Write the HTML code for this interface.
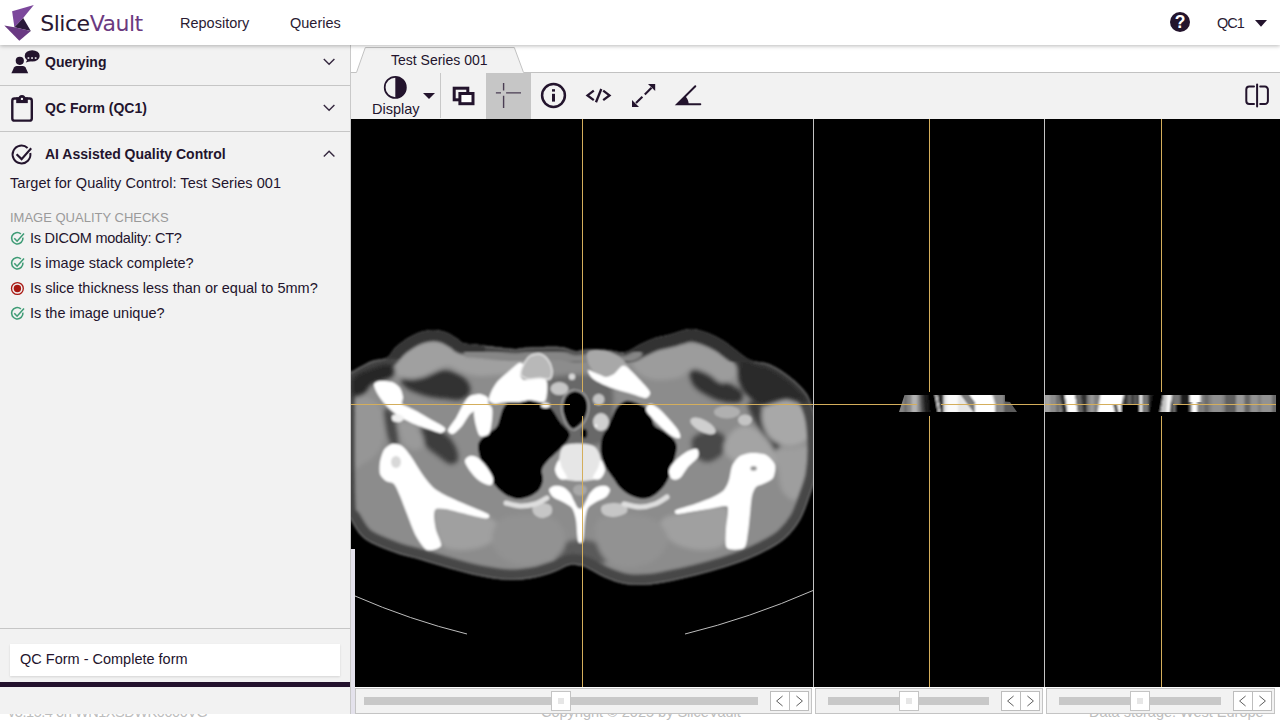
<!DOCTYPE html>
<html lang="en">
<head>
<meta charset="utf-8">
<title>SliceVault</title>
<style>
*{box-sizing:border-box;margin:0;padding:0}
html,body{width:1280px;height:720px;overflow:hidden;background:#fff}
body{font-family:"Liberation Sans",sans-serif;color:#23142d;font-size:14.5px;position:relative}
.abs{position:absolute}
#header{position:absolute;left:0;top:0;width:1280px;height:45px;background:#fff;box-shadow:0 1px 4px rgba(0,0,0,.28);z-index:10}
#logo-txt{position:absolute;left:40.3px;top:8.5px;font-family:"DejaVu Sans",sans-serif;font-size:22px;line-height:30px;color:#2a1832;letter-spacing:-0.5px;white-space:nowrap}
#logo-txt span{color:#6b3a80}
.nav{position:absolute;top:14px;font-size:14.5px;line-height:18px;white-space:nowrap;color:#2a1b33}
#sidebar{position:absolute;left:0;top:45px;width:351px;height:669px;background:#f2f2f2;border-right:1px solid #c9c9c9}
.row{position:absolute;left:0;width:350px;height:46px;border-bottom:1px solid #c6c6c6}
.row .t{position:absolute;left:45px;top:13px;font-weight:bold;font-size:14px;line-height:18px;white-space:nowrap;color:#23142d}
.chev{position:absolute;left:321px;width:15px;height:10px}
.txt{position:absolute;white-space:nowrap;line-height:18px}
#footer div{position:absolute;top:703px;font-size:14.5px;line-height:18px;color:#bdbdbd;white-space:nowrap}
#main{position:absolute;left:351px;top:45px;width:929px;height:669px;background:#fff}
#toolbar{position:absolute;left:0;top:28px;width:929px;height:46px;background:#f2f2f2}
.sl{position:absolute;top:643px;height:26px;background:#f2f2f2;border:1px solid #c4c4c4}
.sl .track{position:absolute;top:8px;height:8px;background:#c8c8c8}
.sl .thumb{position:absolute;top:2px;width:20px;height:20px;background:#fff;border:1px solid #c4c4c4}
.sl .thumb i{position:absolute;left:6px;top:6px;width:6px;height:6px;background:#e6e6e6}
.sl .btn{position:absolute;top:2px;width:20px;height:20px;background:#fff;border:1px solid #bdbdbd}
.sl .btn svg{position:absolute;left:0;top:0}
</style>
</head>
<body>

<div id="footer">
  <div style="left:8px;letter-spacing:-0.44px">v3.15.4 on WN1XSDWK0000VG</div>
  <div style="left:541px">Copyright © 2025 by SliceVault</div>
  <div style="left:1089px">Data storage: West Europe</div>
</div>

<div id="header">
  <svg class="abs" style="left:0;top:0" width="45" height="45" viewBox="0 0 45 45">
    <polygon points="12.1,11.2 33.8,5 23.2,17.9 14.4,27.2" fill="#7c489c"/>
    <polygon points="23.2,17.9 30.8,30.9 14.4,27.2" fill="#2b1a3a"/>
    <polygon points="4.3,25.6 14.4,27.2 30.8,30.9 19.3,40.8" fill="#6a3a83"/>
  </svg>
  <div id="logo-txt">Slice<span>Vault</span></div>
  <div class="nav" style="left:180px">Repository</div>
  <div class="nav" style="left:290px">Queries</div>
  <svg class="abs" style="left:1169px;top:11px" width="22" height="22" viewBox="0 0 22 22">
    <circle cx="11" cy="11" r="10" fill="#23142d"/>
    <text x="11" y="17" text-anchor="middle" font-family="Liberation Sans, sans-serif" font-weight="bold" font-size="17.5" fill="#fff">?</text>
  </svg>
  <div class="nav" style="left:1217px;letter-spacing:-1px">QC1</div>
  <svg class="abs" style="left:1254px;top:19px" width="14" height="9" viewBox="0 0 14 9"><polygon points="1,1 13,1 7,7.8" fill="#23142d"/></svg>
</div>

<div id="sidebar">
  <svg class="abs" style="left:0;top:0" width="350" height="290" viewBox="0 45 350 290">
    <g fill="#23142d" stroke="none">
      <!-- querying -->
      <circle cx="19.8" cy="60.8" r="4.1"/>
      <path d="M11.4 73.2L14 67.6Q14.8 66 16.6 66H23Q24.8 66 25.6 67.6L28.2 73.2z"/>
      <ellipse cx="32.2" cy="55.9" rx="7.5" ry="5.7"/>
      <polygon points="27.5,59.5 25.8,62.6 31,61"/>
      <g fill="#e8e6ea"><rect x="27.6" y="57.2" width="1.7" height="1.7"/><rect x="31.2" y="57.2" width="1.7" height="1.7"/><rect x="34.8" y="57.2" width="1.7" height="1.7"/></g>
      <!-- clipboard -->
      <rect x="12.3" y="98.5" width="19.5" height="22.1" rx="2.2" fill="none" stroke="#23142d" stroke-width="2.4"/>
      <rect x="16.2" y="97.4" width="11.6" height="5.7"/>
      <circle cx="21.95" cy="98.6" r="3.5"/>
      <circle cx="21.95" cy="98.9" r="1.2" fill="#f2f2f2"/>
    </g>
    <!-- ai check -->
    <g fill="none" stroke="#23142d" stroke-width="2">
      <path d="M27.6 148A8.9 8.9 0 1 0 30.3 153"/>
      <polyline points="16.6,154.2 21.6,159.1 31.2,148.2" stroke-width="2.1"/>
    </g>
    <!-- chevrons -->
    <g fill="none" stroke="#35283f" stroke-width="1.4">
      <polyline points="323.8,59 329.1,64.3 334.4,59"/>
      <polyline points="323.8,105 329.1,110.3 334.4,105"/>
      <polyline points="323.8,156.6 329.1,151.3 334.4,156.6"/>
    </g>
    <!-- checks -->
    <g fill="none" stroke="#3f9c76" stroke-width="1.55">
      <g><path d="M20.9 233.9A5.7 5.7 0 1 0 22.9 237.6"/><polyline points="14.3,238.3 17.1,241.2 24,233.4"/></g>
      <g transform="translate(0 25)"><path d="M20.9 233.9A5.7 5.7 0 1 0 22.9 237.6"/><polyline points="14.3,238.3 17.1,241.2 24,233.4"/></g>
      <g transform="translate(0 75)"><path d="M20.9 233.9A5.7 5.7 0 1 0 22.9 237.6"/><polyline points="14.3,238.3 17.1,241.2 24,233.4"/></g>
    </g>
    <circle cx="17.4" cy="288.5" r="5.9" fill="none" stroke="#a81711" stroke-width="1.3"/>
    <circle cx="17.4" cy="288.5" r="3.7" fill="#a81711"/>
  </svg>
  <div class="row" style="top:-5px">
    <div class="t">Querying</div>
  </div>
  <div class="row" style="top:41px">
    <div class="t">QC Form (QC1)</div>
  </div>
  <div class="row" style="top:87px;border-bottom:none">
    <div class="t">AI Assisted Quality Control</div>
  </div>
  <div class="txt" style="left:10px;top:129px;letter-spacing:0.05px">Target for Quality Control: Test Series 001</div>
  <div class="txt" style="left:10px;top:164px;color:#9a9a9a;font-size:13px">IMAGE QUALITY CHECKS</div>
  <div class="txt" style="left:30px;top:184px;letter-spacing:-0.25px">Is DICOM modality: CT?</div>
  <div class="txt" style="left:30px;top:209px">Is image stack complete?</div>
  <div class="txt" style="left:30px;top:234px">Is slice thickness less than or equal to 5mm?</div>
  <div class="txt" style="left:30px;top:259px">Is the image unique?</div>
  <div class="abs" style="left:0;top:583px;width:350px;height:1px;background:#c6c6c6"></div>
  <div class="abs" style="left:10px;top:599px;width:330px;height:32px;background:#fff;box-shadow:0 1px 2px rgba(0,0,0,.12)">
    <div class="txt" style="left:10px;top:6px">QC Form - Complete form</div>
  </div>
  <div class="abs" style="left:0;top:637px;width:350px;height:5px;background:#23122d"></div>
</div>

<div id="main">
  <div id="toolbar"></div>
  <!-- tab strip -->
  <svg class="abs" style="left:0;top:0" width="929" height="29" viewBox="351 45 929 29">
    <polygon points="356.5,73 365.3,47.5 514.3,47.5 523.5,73" fill="#f2f2f2"/>
    <polyline points="351,72.5 356.5,72.5 365.3,47.5 514.3,47.5 523.5,72.5 1280,72.5" fill="none" stroke="#c2c2c2" stroke-width="1"/>
  </svg>
  <div class="txt" style="left:40px;top:6px;font-size:14px">Test Series 001</div>

  <!-- toolbar content -->
  <div class="abs" style="left:135px;top:28px;width:45px;height:46px;background:#c6c6c6"></div>
  <div class="abs" style="left:89px;top:28px;width:1px;height:45px;background:#c8c8c8"></div>
  <div class="txt" style="left:21px;top:55px;font-size:14.5px">Display</div>
  <svg class="abs" style="left:0;top:28px" width="929" height="46" viewBox="351 73 929 46">
    <g fill="none" stroke="#23142d">
      <!-- display -->
      <circle cx="395.3" cy="87.4" r="10.6" stroke-width="1.7"/>
      <path d="M395.3 76.8A10.6 10.6 0 0 1 395.3 98z" fill="#23142d" stroke="none"/>
      <polygon points="423,93 435,93 429,99" fill="#23142d" stroke="none"/>
      <!-- overlay -->
      <rect x="454.2" y="88.2" width="13.6" height="11.6" stroke-width="3"/>
      <rect x="459.9" y="93.5" width="13.1" height="10.2" stroke-width="3" fill="#fff"/>
      <!-- crosshair -->
      <g stroke="#4a3d53" stroke-width="1.4">
        <path d="M503.6 83V90.4M503.6 95.7V108M495.9 92.9H501M506.1 92.9H521"/>
      </g>
      <!-- info -->
      <circle cx="553.5" cy="95.5" r="11.4" stroke-width="2.5"/>
      <rect x="552" y="89.2" width="3" height="2.4" fill="#23142d" stroke="none"/>
      <rect x="552" y="93.8" width="3" height="7.8" fill="#23142d" stroke="none"/>
      <!-- code -->
      <g stroke-width="2.3">
        <polyline points="593.8,90.6 587.5,95.4 593.8,100.2"/>
        <polyline points="603.2,90.6 609.5,95.4 603.2,100.2"/>
        <line x1="601.3" y1="89" x2="596" y2="102.2"/>
      </g>
      <!-- arrows -->
      <g stroke-width="2.1">
        <line x1="636" y1="103" x2="642.4" y2="96.8"/>
        <line x1="644.8" y1="94.4" x2="651.5" y2="87.8"/>
      </g>
      <polygon points="655.2,84.1 648,84.1 655.2,91" fill="#23142d" stroke="none"/>
      <polygon points="632,106.9 632,100.1 639,106.9" fill="#23142d" stroke="none"/>
      <!-- angle -->
      <g stroke-width="2" stroke-linecap="round">
        <polyline points="695.3,86.3 677.2,104.3 700.3,104.3"/>
      </g>
      <path d="M677.2 104.3L685.3 96.2A11.5 11.5 0 0 1 688.7 104.3z" fill="#23142d" stroke="none"/>
      <!-- split -->
      <g stroke-width="2" stroke-linecap="round">
        <path d="M1254 86.6H1249.3A3 3 0 0 0 1246.3 89.6V101A3 3 0 0 0 1249.3 104H1254"/>
        <path d="M1260.2 86.6H1264.9A3 3 0 0 1 1267.9 89.6V101A3 3 0 0 1 1264.9 104H1260.2"/>
        <line x1="1257.1" y1="84.4" x2="1257.1" y2="106.6"/>
      </g>
    </g>
  </svg>

  <!-- viewer -->
  <div class="abs" style="left:0;top:74px;width:929px;height:568px;background:#000"></div>
  <!--CT--><svg class="abs" style="left:0;top:74px" width="462" height="568" viewBox="351 119 462 568">
<defs><clipPath id="bc"><path d="M345.0 374.0C346.0 351.8 348.5 373.2 351.0 372.0C353.5 370.8 356.5 368.8 360.0 367.0C363.5 365.2 367.5 362.6 372.0 361.0C376.5 359.4 383.2 359.7 387.0 357.5C390.8 355.3 392.0 350.9 395.0 348.0C398.0 345.1 401.2 342.5 405.0 340.0C408.8 337.5 413.5 334.7 418.0 333.0C422.5 331.3 427.5 330.2 432.0 330.0C436.5 329.8 440.8 330.6 445.0 332.0C449.2 333.4 454.0 336.7 457.0 338.5C460.0 340.3 459.2 341.9 463.0 343.0C466.8 344.1 473.8 344.2 480.0 345.0C486.2 345.8 494.2 346.8 500.0 347.5C505.8 348.2 510.0 349.0 515.0 349.0C520.0 349.0 522.5 347.8 530.0 347.5C537.5 347.2 552.5 346.4 560.0 347.0C567.5 347.6 571.2 350.5 575.0 351.0C578.8 351.5 580.5 350.2 583.0 350.0C585.5 349.8 586.0 349.5 590.0 349.5C594.0 349.5 601.2 349.6 607.0 350.0C612.8 350.4 619.5 352.9 625.0 352.0C630.5 351.1 635.0 346.8 640.0 344.5C645.0 342.2 650.0 339.7 655.0 338.0C660.0 336.3 664.2 336.0 670.0 334.5C675.8 333.0 684.2 329.4 690.0 329.0C695.8 328.6 699.7 330.2 705.0 332.0C710.3 333.8 717.0 337.1 722.0 340.0C727.0 342.9 730.3 346.2 735.0 349.5C739.7 352.8 744.2 357.5 750.0 360.0C755.8 362.5 763.3 361.7 770.0 364.5C776.7 367.3 784.2 372.5 790.0 377.0C795.8 381.5 801.5 387.2 805.0 391.5C808.5 395.8 809.2 398.2 811.0 403.0C812.8 407.8 814.8 412.2 816.0 420.0C817.2 427.8 818.0 440.8 818.0 450.0C818.0 459.2 817.3 467.5 816.0 475.0C814.7 482.5 812.7 487.5 810.0 495.0C807.3 502.5 804.2 512.8 800.0 520.0C795.8 527.2 790.8 533.3 785.0 538.5C779.2 543.7 772.5 547.1 765.0 551.0C757.5 554.9 749.2 558.6 740.0 562.0C730.8 565.4 720.0 568.7 710.0 571.5C700.0 574.3 690.0 576.8 680.0 579.0C670.0 581.2 659.2 583.7 650.0 584.5C640.8 585.3 632.5 585.2 625.0 584.0C617.5 582.8 610.8 579.9 605.0 577.5C599.2 575.1 593.8 571.4 590.0 569.5C586.2 567.6 585.3 566.8 582.0 566.0C578.7 565.2 574.5 564.1 570.0 565.0C565.5 565.9 560.8 569.4 555.0 571.5C549.2 573.6 542.5 576.1 535.0 577.5C527.5 578.9 519.2 580.2 510.0 580.0C500.8 579.8 490.0 577.9 480.0 576.0C470.0 574.1 460.0 571.2 450.0 568.5C440.0 565.8 429.2 562.2 420.0 559.5C410.8 556.8 404.2 555.9 395.0 552.5C385.8 549.1 372.3 544.4 365.0 539.0C357.7 533.6 354.3 525.7 351.0 520.0C347.7 514.3 346.0 529.3 345.0 505.0C344.0 480.7 344.0 396.2 345.0 374.0z"/></clipPath>
<filter id="b1" x="-5%" y="-5%" width="110%" height="110%"><feGaussianBlur stdDeviation="1"/></filter>
<filter id="b2" x="-10%" y="-10%" width="120%" height="120%"><feGaussianBlur stdDeviation="2"/></filter>
</defs>
<g filter="url(#b1)">
<path d="M345.0 374.0C346.0 351.8 348.5 373.2 351.0 372.0C353.5 370.8 356.5 368.8 360.0 367.0C363.5 365.2 367.5 362.6 372.0 361.0C376.5 359.4 383.2 359.7 387.0 357.5C390.8 355.3 392.0 350.9 395.0 348.0C398.0 345.1 401.2 342.5 405.0 340.0C408.8 337.5 413.5 334.7 418.0 333.0C422.5 331.3 427.5 330.2 432.0 330.0C436.5 329.8 440.8 330.6 445.0 332.0C449.2 333.4 454.0 336.7 457.0 338.5C460.0 340.3 459.2 341.9 463.0 343.0C466.8 344.1 473.8 344.2 480.0 345.0C486.2 345.8 494.2 346.8 500.0 347.5C505.8 348.2 510.0 349.0 515.0 349.0C520.0 349.0 522.5 347.8 530.0 347.5C537.5 347.2 552.5 346.4 560.0 347.0C567.5 347.6 571.2 350.5 575.0 351.0C578.8 351.5 580.5 350.2 583.0 350.0C585.5 349.8 586.0 349.5 590.0 349.5C594.0 349.5 601.2 349.6 607.0 350.0C612.8 350.4 619.5 352.9 625.0 352.0C630.5 351.1 635.0 346.8 640.0 344.5C645.0 342.2 650.0 339.7 655.0 338.0C660.0 336.3 664.2 336.0 670.0 334.5C675.8 333.0 684.2 329.4 690.0 329.0C695.8 328.6 699.7 330.2 705.0 332.0C710.3 333.8 717.0 337.1 722.0 340.0C727.0 342.9 730.3 346.2 735.0 349.5C739.7 352.8 744.2 357.5 750.0 360.0C755.8 362.5 763.3 361.7 770.0 364.5C776.7 367.3 784.2 372.5 790.0 377.0C795.8 381.5 801.5 387.2 805.0 391.5C808.5 395.8 809.2 398.2 811.0 403.0C812.8 407.8 814.8 412.2 816.0 420.0C817.2 427.8 818.0 440.8 818.0 450.0C818.0 459.2 817.3 467.5 816.0 475.0C814.7 482.5 812.7 487.5 810.0 495.0C807.3 502.5 804.2 512.8 800.0 520.0C795.8 527.2 790.8 533.3 785.0 538.5C779.2 543.7 772.5 547.1 765.0 551.0C757.5 554.9 749.2 558.6 740.0 562.0C730.8 565.4 720.0 568.7 710.0 571.5C700.0 574.3 690.0 576.8 680.0 579.0C670.0 581.2 659.2 583.7 650.0 584.5C640.8 585.3 632.5 585.2 625.0 584.0C617.5 582.8 610.8 579.9 605.0 577.5C599.2 575.1 593.8 571.4 590.0 569.5C586.2 567.6 585.3 566.8 582.0 566.0C578.7 565.2 574.5 564.1 570.0 565.0C565.5 565.9 560.8 569.4 555.0 571.5C549.2 573.6 542.5 576.1 535.0 577.5C527.5 578.9 519.2 580.2 510.0 580.0C500.8 579.8 490.0 577.9 480.0 576.0C470.0 574.1 460.0 571.2 450.0 568.5C440.0 565.8 429.2 562.2 420.0 559.5C410.8 556.8 404.2 555.9 395.0 552.5C385.8 549.1 372.3 544.4 365.0 539.0C357.7 533.6 354.3 525.7 351.0 520.0C347.7 514.3 346.0 529.3 345.0 505.0C344.0 480.7 344.0 396.2 345.0 374.0z" fill="#8c8c8c"/>
<g clip-path="url(#bc)">
<g filter="url(#b2)">
<path d="M347.0 374.0C351.2 368.2 365.2 365.3 372.0 363.0C378.8 360.7 384.0 359.2 388.0 360.0C392.0 360.8 395.3 365.3 396.0 368.0C396.7 370.7 394.7 374.0 392.0 376.0C389.3 378.0 383.7 378.7 380.0 380.0C376.3 381.3 372.7 382.0 370.0 384.0C367.3 386.0 367.8 389.7 364.0 392.0C360.2 394.3 349.8 401.0 347.0 398.0C344.2 395.0 342.8 379.8 347.0 374.0z" fill="#2c2c2c"/>
<path d="M402.0 379.0C404.3 377.7 413.0 378.8 418.0 378.0C423.0 377.2 427.7 375.3 432.0 374.0C436.3 372.7 439.7 370.0 444.0 370.0C448.3 370.0 454.0 372.0 458.0 374.0C462.0 376.0 466.0 378.8 468.0 382.0C470.0 385.2 471.3 390.0 470.0 393.0C468.7 396.0 464.0 399.0 460.0 400.0C456.0 401.0 451.0 399.5 446.0 399.0C441.0 398.5 435.3 398.2 430.0 397.0C424.7 395.8 418.3 393.8 414.0 392.0C409.7 390.2 406.0 388.2 404.0 386.0C402.0 383.8 399.7 380.3 402.0 379.0z" fill="#333"/>
<path d="M418.0 430.0C419.3 427.0 429.0 427.0 434.0 428.0C439.0 429.0 444.3 432.7 448.0 436.0C451.7 439.3 454.3 444.0 456.0 448.0C457.7 452.0 459.0 457.3 458.0 460.0C457.0 462.7 453.3 464.7 450.0 464.0C446.7 463.3 442.0 459.0 438.0 456.0C434.0 453.0 429.3 450.3 426.0 446.0C422.7 441.7 416.7 433.0 418.0 430.0z" fill="#3c3c3c"/>
<path d="M384.0 410.0C385.0 407.0 389.8 409.0 392.0 412.0C394.2 415.0 396.0 422.7 397.0 428.0C398.0 433.3 398.8 441.0 398.0 444.0C397.2 447.0 394.0 448.3 392.0 446.0C390.0 443.7 387.3 436.0 386.0 430.0C384.7 424.0 383.0 413.0 384.0 410.0z" fill="#4a4a4a"/>
<path d="M734.0 352.0C736.5 349.7 745.7 356.0 752.0 358.0C758.3 360.0 765.3 360.8 772.0 364.0C778.7 367.2 786.2 372.3 792.0 377.0C797.8 381.7 803.5 387.5 807.0 392.0C810.5 396.5 814.2 402.3 813.0 404.0C811.8 405.7 804.5 403.0 800.0 402.0C795.5 401.0 790.7 398.0 786.0 398.0C781.3 398.0 776.0 401.0 772.0 402.0C768.0 403.0 765.3 404.7 762.0 404.0C758.7 403.3 755.3 400.7 752.0 398.0C748.7 395.3 744.5 392.3 742.0 388.0C739.5 383.7 738.3 378.0 737.0 372.0C735.7 366.0 731.5 354.3 734.0 352.0z" fill="#2d2d2d"/>
<path d="M690.0 372.0C691.3 369.2 697.7 368.3 702.0 369.0C706.3 369.7 711.3 373.5 716.0 376.0C720.7 378.5 725.7 381.3 730.0 384.0C734.3 386.7 740.3 389.0 742.0 392.0C743.7 395.0 743.0 400.3 740.0 402.0C737.0 403.7 729.3 403.0 724.0 402.0C718.7 401.0 713.0 398.7 708.0 396.0C703.0 393.3 697.0 390.0 694.0 386.0C691.0 382.0 688.7 374.8 690.0 372.0z" fill="#303030"/>
<path d="M748.0 404.0C748.7 401.0 755.3 400.3 758.0 402.0C760.7 403.7 761.7 409.3 764.0 414.0C766.3 418.7 769.3 424.7 772.0 430.0C774.7 435.3 779.7 442.7 780.0 446.0C780.3 449.3 776.7 451.7 774.0 450.0C771.3 448.3 767.3 441.0 764.0 436.0C760.7 431.0 756.7 425.3 754.0 420.0C751.3 414.7 747.3 407.0 748.0 404.0z" fill="#3a3a3a"/>
<path d="M692.0 440.0C693.3 436.0 699.7 433.3 704.0 432.0C708.3 430.7 714.3 430.7 718.0 432.0C721.7 433.3 725.3 436.3 726.0 440.0C726.7 443.7 725.0 450.3 722.0 454.0C719.0 457.7 712.3 461.7 708.0 462.0C703.7 462.3 698.7 459.7 696.0 456.0C693.3 452.3 690.7 444.0 692.0 440.0z" fill="#484848"/>
<path d="M560.0 545.0C564.0 541.7 573.0 540.0 580.0 540.0C587.0 540.0 597.0 541.7 602.0 545.0C607.0 548.3 613.3 556.5 610.0 560.0C606.7 563.5 591.0 566.0 582.0 566.0C573.0 566.0 559.7 563.5 556.0 560.0C552.3 556.5 556.0 548.3 560.0 545.0z" fill="#5a5a5a"/>
<path d="M392.0 367.0C392.7 363.5 396.3 356.7 400.0 353.0C403.7 349.3 408.7 347.0 414.0 345.0C419.3 343.0 426.3 341.2 432.0 341.0C437.7 340.8 443.3 342.2 448.0 344.0C452.7 345.8 454.7 350.0 460.0 352.0C465.3 354.0 472.5 355.0 480.0 356.0C487.5 357.0 496.7 357.7 505.0 358.0C513.3 358.3 523.3 357.3 530.0 358.0C536.7 358.7 545.0 360.0 545.0 362.0C545.0 364.0 536.7 368.0 530.0 370.0C523.3 372.0 513.3 373.0 505.0 374.0C496.7 375.0 487.2 376.3 480.0 376.0C472.8 375.7 467.3 373.7 462.0 372.0C456.7 370.3 452.3 366.3 448.0 366.0C443.7 365.7 440.0 368.2 436.0 370.0C432.0 371.8 428.7 375.5 424.0 377.0C419.3 378.5 412.7 379.5 408.0 379.0C403.3 378.5 398.7 376.0 396.0 374.0C393.3 372.0 391.3 370.5 392.0 367.0z" fill="#a0a0a0"/>
<path d="M633.0 360.0C635.0 356.8 642.8 353.3 648.0 351.0C653.2 348.7 658.3 347.3 664.0 346.0C669.7 344.7 676.0 343.3 682.0 343.0C688.0 342.7 693.7 342.7 700.0 344.0C706.3 345.3 714.0 347.7 720.0 351.0C726.0 354.3 733.3 359.8 736.0 364.0C738.7 368.2 738.3 372.8 736.0 376.0C733.7 379.2 726.7 383.3 722.0 383.0C717.3 382.7 713.0 376.3 708.0 374.0C703.0 371.7 696.7 368.5 692.0 369.0C687.3 369.5 685.3 375.2 680.0 377.0C674.7 378.8 665.8 380.0 660.0 380.0C654.2 380.0 649.0 378.7 645.0 377.0C641.0 375.3 638.0 372.8 636.0 370.0C634.0 367.2 631.0 363.2 633.0 360.0z" fill="#9c9c9c"/>
<path d="M762.0 412.0C763.0 407.8 766.0 405.0 770.0 403.0C774.0 401.0 781.0 399.8 786.0 400.0C791.0 400.2 796.0 401.3 800.0 404.0C804.0 406.7 808.0 411.3 810.0 416.0C812.0 420.7 813.0 427.7 812.0 432.0C811.0 436.3 808.0 439.7 804.0 442.0C800.0 444.3 793.3 446.3 788.0 446.0C782.7 445.7 776.0 443.0 772.0 440.0C768.0 437.0 765.7 432.7 764.0 428.0C762.3 423.3 761.0 416.2 762.0 412.0z" fill="#a8a8a8"/>
<path d="M776.0 450.0C778.3 446.3 786.7 448.7 792.0 448.0C797.3 447.3 804.0 444.7 808.0 446.0C812.0 447.3 815.0 451.0 816.0 456.0C817.0 461.0 815.7 470.0 814.0 476.0C812.3 482.0 809.3 488.0 806.0 492.0C802.7 496.0 798.0 500.3 794.0 500.0C790.0 499.7 784.7 495.0 782.0 490.0C779.3 485.0 779.0 476.7 778.0 470.0C777.0 463.3 773.7 453.7 776.0 450.0z" fill="#9e9e9e"/>
<path d="M724.0 444.0C725.3 440.0 730.3 433.0 734.0 430.0C737.7 427.0 741.7 425.7 746.0 426.0C750.3 426.3 755.7 428.7 760.0 432.0C764.3 435.3 769.3 441.0 772.0 446.0C774.7 451.0 776.3 457.7 776.0 462.0C775.7 466.3 774.0 470.7 770.0 472.0C766.0 473.3 757.7 471.7 752.0 470.0C746.3 468.3 740.3 464.7 736.0 462.0C731.7 459.3 728.0 457.0 726.0 454.0C724.0 451.0 722.7 448.0 724.0 444.0z" fill="#a4a4a4"/>
<path d="M347.0 398.0C349.5 386.3 357.2 395.3 362.0 396.0C366.8 396.7 372.5 398.7 376.0 402.0C379.5 405.3 381.7 410.3 383.0 416.0C384.3 421.7 384.8 430.0 384.0 436.0C383.2 442.0 381.0 447.7 378.0 452.0C375.0 456.3 371.2 459.7 366.0 462.0C360.8 464.3 350.2 476.7 347.0 466.0C343.8 455.3 344.5 409.7 347.0 398.0z" fill="#969696"/>
<path d="M398.0 424.0C399.0 420.3 406.3 421.0 410.0 422.0C413.7 423.0 417.7 426.3 420.0 430.0C422.3 433.7 424.7 440.7 424.0 444.0C423.3 447.3 419.3 450.0 416.0 450.0C412.7 450.0 407.0 448.3 404.0 444.0C401.0 439.7 397.0 427.7 398.0 424.0z" fill="#9a9a9a"/>
<path d="M434.0 506.0C436.0 499.7 445.0 503.0 452.0 504.0C459.0 505.0 468.7 509.0 476.0 512.0C483.3 515.0 492.0 518.3 496.0 522.0C500.0 525.7 502.0 530.0 500.0 534.0C498.0 538.0 491.0 543.3 484.0 546.0C477.0 548.7 465.3 550.7 458.0 550.0C450.7 549.3 444.0 549.3 440.0 542.0C436.0 534.7 432.0 512.3 434.0 506.0z" fill="#a0a0a0"/>
<path d="M664.0 518.0C668.7 515.0 681.3 514.0 690.0 512.0C698.7 510.0 709.7 506.3 716.0 506.0C722.3 505.7 725.7 506.0 728.0 510.0C730.3 514.0 731.0 524.0 730.0 530.0C729.0 536.0 727.0 542.7 722.0 546.0C717.0 549.3 707.7 550.3 700.0 550.0C692.3 549.7 682.3 547.3 676.0 544.0C669.7 540.7 664.0 534.3 662.0 530.0C660.0 525.7 659.3 521.0 664.0 518.0z" fill="#a0a0a0"/>
<path d="M500.0 520.0C506.3 515.3 520.7 514.0 530.0 514.0C539.3 514.0 550.0 515.7 556.0 520.0C562.0 524.3 566.0 533.7 566.0 540.0C566.0 546.3 562.0 553.7 556.0 558.0C550.0 562.3 538.5 565.7 530.0 566.0C521.5 566.3 511.3 564.0 505.0 560.0C498.7 556.0 492.8 548.7 492.0 542.0C491.2 535.3 493.7 524.7 500.0 520.0z" fill="#929292"/>
<path d="M598.0 520.0C602.8 515.7 615.5 514.0 625.0 514.0C634.5 514.0 647.8 515.7 655.0 520.0C662.2 524.3 668.0 533.3 668.0 540.0C668.0 546.7 661.7 555.3 655.0 560.0C648.3 564.7 636.2 568.0 628.0 568.0C619.8 568.0 611.3 564.7 606.0 560.0C600.7 555.3 597.3 546.7 596.0 540.0C594.7 533.3 593.2 524.3 598.0 520.0z" fill="#929292"/>
<path d="M548.0 384.0C549.3 375.0 551.3 377.3 560.0 376.0C568.7 374.7 591.3 374.3 600.0 376.0C608.7 377.7 610.0 377.0 612.0 386.0C614.0 395.0 614.0 420.3 612.0 430.0C610.0 439.7 608.7 441.7 600.0 444.0C591.3 446.3 568.0 446.3 560.0 444.0C552.0 441.7 554.0 440.0 552.0 430.0C550.0 420.0 546.7 393.0 548.0 384.0z" fill="#686868"/>
</g>
<path d="M345.0 374.0C346.0 351.8 348.5 373.2 351.0 372.0C353.5 370.8 356.5 368.8 360.0 367.0C363.5 365.2 367.5 362.6 372.0 361.0C376.5 359.4 383.2 359.7 387.0 357.5C390.8 355.3 392.0 350.9 395.0 348.0C398.0 345.1 401.2 342.5 405.0 340.0C408.8 337.5 413.5 334.7 418.0 333.0C422.5 331.3 427.5 330.2 432.0 330.0C436.5 329.8 440.8 330.6 445.0 332.0C449.2 333.4 454.0 336.7 457.0 338.5C460.0 340.3 459.2 341.9 463.0 343.0C466.8 344.1 473.8 344.2 480.0 345.0C486.2 345.8 494.2 346.8 500.0 347.5C505.8 348.2 510.0 349.0 515.0 349.0C520.0 349.0 522.5 347.8 530.0 347.5C537.5 347.2 552.5 346.4 560.0 347.0C567.5 347.6 571.2 350.5 575.0 351.0C578.8 351.5 580.5 350.2 583.0 350.0C585.5 349.8 586.0 349.5 590.0 349.5C594.0 349.5 601.2 349.6 607.0 350.0C612.8 350.4 619.5 352.9 625.0 352.0C630.5 351.1 635.0 346.8 640.0 344.5C645.0 342.2 650.0 339.7 655.0 338.0C660.0 336.3 664.2 336.0 670.0 334.5C675.8 333.0 684.2 329.4 690.0 329.0C695.8 328.6 699.7 330.2 705.0 332.0C710.3 333.8 717.0 337.1 722.0 340.0C727.0 342.9 730.3 346.2 735.0 349.5C739.7 352.8 744.2 357.5 750.0 360.0C755.8 362.5 763.3 361.7 770.0 364.5C776.7 367.3 784.2 372.5 790.0 377.0C795.8 381.5 801.5 387.2 805.0 391.5C808.5 395.8 809.2 398.2 811.0 403.0C812.8 407.8 814.8 412.2 816.0 420.0C817.2 427.8 818.0 440.8 818.0 450.0C818.0 459.2 817.3 467.5 816.0 475.0C814.7 482.5 812.7 487.5 810.0 495.0C807.3 502.5 804.2 512.8 800.0 520.0C795.8 527.2 790.8 533.3 785.0 538.5C779.2 543.7 772.5 547.1 765.0 551.0C757.5 554.9 749.2 558.6 740.0 562.0C730.8 565.4 720.0 568.7 710.0 571.5C700.0 574.3 690.0 576.8 680.0 579.0C670.0 581.2 659.2 583.7 650.0 584.5C640.8 585.3 632.5 585.2 625.0 584.0C617.5 582.8 610.8 579.9 605.0 577.5C599.2 575.1 593.8 571.4 590.0 569.5C586.2 567.6 585.3 566.8 582.0 566.0C578.7 565.2 574.5 564.1 570.0 565.0C565.5 565.9 560.8 569.4 555.0 571.5C549.2 573.6 542.5 576.1 535.0 577.5C527.5 578.9 519.2 580.2 510.0 580.0C500.8 579.8 490.0 577.9 480.0 576.0C470.0 574.1 460.0 571.2 450.0 568.5C440.0 565.8 429.2 562.2 420.0 559.5C410.8 556.8 404.2 555.9 395.0 552.5C385.8 549.1 372.3 544.4 365.0 539.0C357.7 533.6 354.3 525.7 351.0 520.0C347.7 514.3 346.0 529.3 345.0 505.0C344.0 480.7 344.0 396.2 345.0 374.0z" fill="none" stroke="#464646" stroke-width="21" filter="url(#b1)"/>
<path d="M345.0 374.0C346.0 351.8 348.5 373.2 351.0 372.0C353.5 370.8 356.5 368.8 360.0 367.0C363.5 365.2 367.5 362.6 372.0 361.0C376.5 359.4 383.2 359.7 387.0 357.5C390.8 355.3 392.0 350.9 395.0 348.0C398.0 345.1 401.2 342.5 405.0 340.0C408.8 337.5 413.5 334.7 418.0 333.0C422.5 331.3 427.5 330.2 432.0 330.0C436.5 329.8 440.8 330.6 445.0 332.0C449.2 333.4 454.0 336.7 457.0 338.5C460.0 340.3 459.2 341.9 463.0 343.0C466.8 344.1 473.8 344.2 480.0 345.0C486.2 345.8 494.2 346.8 500.0 347.5C505.8 348.2 510.0 349.0 515.0 349.0C520.0 349.0 522.5 347.8 530.0 347.5C537.5 347.2 552.5 346.4 560.0 347.0C567.5 347.6 571.2 350.5 575.0 351.0C578.8 351.5 580.5 350.2 583.0 350.0C585.5 349.8 586.0 349.5 590.0 349.5C594.0 349.5 601.2 349.6 607.0 350.0C612.8 350.4 619.5 352.9 625.0 352.0C630.5 351.1 635.0 346.8 640.0 344.5C645.0 342.2 650.0 339.7 655.0 338.0C660.0 336.3 664.2 336.0 670.0 334.5C675.8 333.0 684.2 329.4 690.0 329.0C695.8 328.6 699.7 330.2 705.0 332.0C710.3 333.8 717.0 337.1 722.0 340.0C727.0 342.9 730.3 346.2 735.0 349.5C739.7 352.8 744.2 357.5 750.0 360.0C755.8 362.5 763.3 361.7 770.0 364.5C776.7 367.3 784.2 372.5 790.0 377.0C795.8 381.5 801.5 387.2 805.0 391.5C808.5 395.8 809.2 398.2 811.0 403.0C812.8 407.8 814.8 412.2 816.0 420.0C817.2 427.8 818.0 440.8 818.0 450.0C818.0 459.2 817.3 467.5 816.0 475.0C814.7 482.5 812.7 487.5 810.0 495.0C807.3 502.5 804.2 512.8 800.0 520.0C795.8 527.2 790.8 533.3 785.0 538.5C779.2 543.7 772.5 547.1 765.0 551.0C757.5 554.9 749.2 558.6 740.0 562.0C730.8 565.4 720.0 568.7 710.0 571.5C700.0 574.3 690.0 576.8 680.0 579.0C670.0 581.2 659.2 583.7 650.0 584.5C640.8 585.3 632.5 585.2 625.0 584.0C617.5 582.8 610.8 579.9 605.0 577.5C599.2 575.1 593.8 571.4 590.0 569.5C586.2 567.6 585.3 566.8 582.0 566.0C578.7 565.2 574.5 564.1 570.0 565.0C565.5 565.9 560.8 569.4 555.0 571.5C549.2 573.6 542.5 576.1 535.0 577.5C527.5 578.9 519.2 580.2 510.0 580.0C500.8 579.8 490.0 577.9 480.0 576.0C470.0 574.1 460.0 571.2 450.0 568.5C440.0 565.8 429.2 562.2 420.0 559.5C410.8 556.8 404.2 555.9 395.0 552.5C385.8 549.1 372.3 544.4 365.0 539.0C357.7 533.6 354.3 525.7 351.0 520.0C347.7 514.3 346.0 529.3 345.0 505.0C344.0 480.7 344.0 396.2 345.0 374.0z" fill="none" stroke="#6a6a6a" stroke-width="2.5"/>
<g filter="url(#b2)">
<path d="M353.0 378.0C356.2 373.3 366.2 370.3 372.0 368.0C377.8 365.7 384.3 363.7 388.0 364.0C391.7 364.3 393.7 368.0 394.0 370.0C394.3 372.0 392.3 374.3 390.0 376.0C387.7 377.7 383.3 378.7 380.0 380.0C376.7 381.3 372.7 382.0 370.0 384.0C367.3 386.0 366.8 390.0 364.0 392.0C361.2 394.0 354.8 398.3 353.0 396.0C351.2 393.7 349.8 382.7 353.0 378.0z" fill="#262626"/>
<path d="M740.0 358.0C742.0 356.3 746.7 360.2 752.0 362.0C757.3 363.8 765.7 365.8 772.0 369.0C778.3 372.2 784.8 376.8 790.0 381.0C795.2 385.2 800.0 390.3 803.0 394.0C806.0 397.7 808.8 401.8 808.0 403.0C807.2 404.2 801.7 401.8 798.0 401.0C794.3 400.2 790.3 397.8 786.0 398.0C781.7 398.2 776.0 401.0 772.0 402.0C768.0 403.0 765.3 404.7 762.0 404.0C758.7 403.3 755.0 400.7 752.0 398.0C749.0 395.3 746.0 392.3 744.0 388.0C742.0 383.7 740.7 377.0 740.0 372.0C739.3 367.0 738.0 359.7 740.0 358.0z" fill="#292929"/>
</g>
<g clip-path="url(#bc)">
<path d="M630.0 350.0C631.7 349.1 635.8 346.5 640.0 344.5C644.2 342.5 650.0 339.7 655.0 338.0C660.0 336.3 664.2 336.0 670.0 334.5C675.8 333.0 684.2 329.4 690.0 329.0C695.8 328.6 699.7 330.2 705.0 332.0C710.3 333.8 717.0 337.1 722.0 340.0C727.0 342.9 730.3 346.2 735.0 349.5C739.7 352.8 747.5 358.2 750.0 360.0" fill="none" stroke="#303030" stroke-width="25" stroke-linecap="round" filter="url(#b1)"/>
<path d="M388.0 357.0C389.2 355.5 392.2 350.8 395.0 348.0C397.8 345.2 401.2 342.5 405.0 340.0C408.8 337.5 413.5 334.7 418.0 333.0C422.5 331.3 427.5 330.2 432.0 330.0C436.5 329.8 440.8 330.6 445.0 332.0C449.2 333.4 454.0 336.7 457.0 338.5C460.0 340.3 459.2 341.9 463.0 343.0C466.8 344.1 477.2 344.7 480.0 345.0" fill="none" stroke="#343434" stroke-width="21" stroke-linecap="round" filter="url(#b1)"/>
</g>
<path d="M468.0 353.0C470.0 353.1 474.7 353.0 480.0 353.5C485.3 354.0 494.2 355.3 500.0 356.0C505.8 356.7 510.0 357.5 515.0 357.5C520.0 357.5 522.5 356.3 530.0 356.0C537.5 355.7 552.5 354.9 560.0 355.5C567.5 356.1 570.0 359.1 575.0 359.5C580.0 359.9 584.7 358.2 590.0 358.0C595.3 357.8 601.2 358.2 607.0 358.5C612.8 358.8 619.8 360.8 625.0 360.0C630.2 359.2 635.8 355.0 638.0 354.0" fill="none" stroke="#868686" stroke-width="9" stroke-linecap="round" filter="url(#b1)"/>
<path d="M510.0 400.8C513.1 399.6 517.0 399.4 522.5 399.8C528.0 400.2 538.1 401.5 543.0 403.0C547.9 404.5 548.9 405.9 551.7 409.0C554.5 412.1 557.1 417.9 560.0 421.7C562.9 425.5 567.7 428.9 569.0 432.0C570.3 435.1 569.8 436.8 568.0 440.0C566.2 443.2 561.4 447.5 558.0 451.0C554.6 454.5 550.2 457.9 547.5 461.0C544.8 464.1 542.8 466.4 542.0 469.6C541.2 472.8 543.5 476.6 543.0 480.0C542.5 483.4 541.4 487.2 539.0 490.0C536.6 492.8 532.6 495.2 528.8 496.7C524.9 498.2 520.2 499.3 516.0 498.8C511.8 498.2 507.4 496.0 503.8 493.5C500.1 491.0 496.1 486.9 494.0 484.0C491.9 481.1 492.8 479.1 491.0 476.0C489.2 472.9 485.0 469.2 483.0 465.4C481.0 461.6 479.5 456.8 478.8 453.0C478.0 449.2 477.4 445.7 478.8 442.5C480.1 439.3 484.0 436.6 487.0 434.0C490.0 431.4 494.2 430.1 496.5 427.0C498.8 423.9 499.4 418.7 500.6 415.4C501.8 412.1 502.2 409.4 503.8 407.0C505.3 404.6 506.9 402.0 510.0 400.8z" fill="#000"/>
<path d="M626.7 400.8C629.9 400.3 633.5 401.6 637.0 403.0C640.5 404.4 645.0 406.6 647.5 409.0C650.0 411.4 650.5 414.7 651.7 417.5C652.9 420.3 652.6 423.4 654.8 425.8C657.0 428.2 661.7 429.6 665.0 432.0C668.3 434.4 672.6 437.6 674.6 440.4C676.6 443.2 676.9 445.0 676.7 448.8C676.5 452.5 674.5 458.8 673.5 463.0C672.5 467.2 672.0 469.9 670.4 473.8C668.8 477.6 666.8 482.4 664.0 486.0C661.2 489.6 657.2 493.5 653.8 495.6C650.2 497.7 646.8 498.8 643.0 498.8C639.2 498.8 634.6 497.4 630.8 495.6C627.0 493.8 623.4 490.9 620.4 488.0C617.4 485.1 615.4 481.4 613.0 478.0C610.6 474.6 607.7 471.0 605.8 467.5C603.9 464.0 602.6 460.5 601.7 457.0C600.8 453.5 600.4 450.2 600.6 446.7C600.8 443.2 601.5 439.3 602.7 436.0C603.9 432.7 606.3 430.4 608.0 427.0C609.7 423.6 611.3 418.9 613.0 415.4C614.7 411.9 615.7 408.4 618.0 406.0C620.3 403.6 623.5 401.3 626.7 400.8z" fill="#000"/>
<path d="M575.5 391.5C577.6 391.6 580.2 392.4 582.0 394.0C583.8 395.6 585.7 398.3 586.5 401.0C587.3 403.7 587.4 407.0 587.0 410.0C586.6 413.0 585.3 416.5 584.0 419.0C582.7 421.5 580.8 423.4 579.0 425.0C577.2 426.6 574.8 428.7 573.0 428.5C571.2 428.3 569.4 426.1 568.0 424.0C566.6 421.9 565.3 418.7 564.5 416.0C563.7 413.3 562.9 410.8 563.0 408.0C563.1 405.2 563.9 401.4 565.0 399.0C566.1 396.6 567.8 394.8 569.5 393.5C571.2 392.2 573.4 391.4 575.5 391.5z" fill="#000"/>
<path d="M575.5 390.0C577.9 390.2 580.9 391.2 583.0 393.0C585.1 394.8 587.1 398.2 588.0 401.0C588.9 403.8 588.9 406.8 588.5 410.0C588.1 413.2 586.9 417.2 585.5 420.0C584.1 422.8 582.1 424.8 580.0 426.5C577.9 428.2 575.2 430.2 573.0 430.0C570.8 429.8 568.7 427.3 567.0 425.0C565.3 422.7 563.9 418.8 563.0 416.0C562.1 413.2 561.4 411.0 561.5 408.0C561.6 405.0 562.3 400.7 563.5 398.0C564.7 395.3 566.5 393.3 568.5 392.0C570.5 390.7 573.1 389.8 575.5 390.0z" fill="none" stroke="#b0b0b0" stroke-width="1.2"/>
<ellipse cx="584.5" cy="433.5" rx="2.8" ry="4.8" fill="#000"/>
<circle cx="598.7" cy="399.5" r="5.8" fill="#c4c4c4"/>
<ellipse cx="601" cy="422" rx="8" ry="9" fill="#d0d0d0"/>
<circle cx="596" cy="425.7" r="1.3" fill="#fff"/>
<ellipse cx="545.5" cy="405.5" rx="4.5" ry="2.5" fill="#fff"/>
<ellipse cx="559.4" cy="388.6" rx="9" ry="6.5" fill="#c6c6c6"/>
<circle cx="572" cy="376.8" r="3.2" fill="#d8d8d8"/>
<ellipse cx="727" cy="412" rx="13" ry="6.5" fill="#b0b0b0"/>
<ellipse cx="745" cy="420" rx="7" ry="5.5" fill="#c4c4c4"/>
<ellipse cx="703" cy="426" rx="14" ry="6" fill="#cfcfcf" transform="rotate(28 703 426)"/>
<path d="M562.0 448.0C563.8 445.3 566.0 444.7 570.0 444.0C574.0 443.3 581.7 443.3 586.0 444.0C590.3 444.7 593.5 445.3 596.0 448.0C598.5 450.7 600.0 456.0 601.0 460.0C602.0 464.0 602.8 468.8 602.0 472.0C601.2 475.2 599.7 477.5 596.0 479.0C592.3 480.5 585.3 481.0 580.0 481.0C574.7 481.0 567.7 480.5 564.0 479.0C560.3 477.5 558.8 475.2 558.0 472.0C557.2 468.8 558.3 464.0 559.0 460.0C559.7 456.0 560.2 450.7 562.0 448.0z" fill="#e6e6e6"/>
<path d="M559.0 460.0C560.2 459.7 560.7 465.0 562.0 468.0C563.3 471.0 567.3 476.2 567.0 478.0C566.7 479.8 562.0 480.3 560.0 479.0C558.0 477.7 555.2 473.2 555.0 470.0C554.8 466.8 557.8 460.3 559.0 460.0z" fill="#fff"/>
<path d="M601.0 460.0C599.8 459.7 599.3 465.0 598.0 468.0C596.7 471.0 592.7 476.2 593.0 478.0C593.3 479.8 598.0 480.3 600.0 479.0C602.0 477.7 604.8 473.2 605.0 470.0C605.2 466.8 602.2 460.3 601.0 460.0z" fill="#fff"/>
<ellipse cx="580" cy="490" rx="7" ry="5.5" fill="#a8a8a8"/>
<path d="M549.0 490.0C549.1 488.5 552.1 486.4 554.0 486.0C555.9 485.6 560.9 486.1 563.0 487.0C565.1 487.9 568.5 491.1 570.0 493.0C571.5 494.9 572.9 499.0 574.0 501.0C575.1 503.0 576.9 507.1 578.0 508.0C579.1 508.9 580.9 508.9 582.0 508.0C583.1 507.1 584.9 503.0 586.0 501.0C587.1 499.0 588.5 494.9 590.0 493.0C591.5 491.1 594.9 487.9 597.0 487.0C599.1 486.1 604.3 485.6 606.0 486.0C607.7 486.4 610.0 488.5 610.0 490.0C610.0 491.5 607.9 495.4 606.0 497.0C604.1 498.6 598.4 500.5 596.0 502.0C593.6 503.5 589.5 505.6 588.0 508.0C586.5 510.4 585.7 515.6 585.0 520.0C584.3 524.4 583.9 538.2 583.0 541.0C582.1 543.8 578.9 543.8 578.0 541.0C577.1 538.2 576.8 524.4 576.0 520.0C575.2 515.6 573.7 510.4 572.0 508.0C570.3 505.6 565.5 503.5 563.0 502.0C560.5 500.5 554.9 498.6 553.0 497.0C551.1 495.4 548.9 491.5 549.0 490.0z" fill="#fff"/>
<path d="M533.0 506.0C534.3 504.2 539.0 503.0 542.0 503.0C545.0 503.0 549.5 504.2 551.0 506.0C552.5 507.8 552.5 512.0 551.0 514.0C549.5 516.0 544.8 518.0 542.0 518.0C539.2 518.0 535.5 516.0 534.0 514.0C532.5 512.0 531.7 507.8 533.0 506.0z" fill="#c6c6c6"/>
<path d="M602.0 506.0C603.8 504.2 610.0 503.0 614.0 503.0C618.0 503.0 624.0 504.3 626.0 506.0C628.0 507.7 628.0 511.2 626.0 513.0C624.0 514.8 617.8 516.8 614.0 517.0C610.2 517.2 605.0 515.8 603.0 514.0C601.0 512.2 600.2 507.8 602.0 506.0z" fill="#c6c6c6"/>
<path d="M465.0 462.0C464.3 458.7 467.8 456.7 470.0 456.0C472.2 455.3 475.3 456.3 478.0 458.0C480.7 459.7 483.5 462.7 486.0 466.0C488.5 469.3 492.2 474.8 493.0 478.0C493.8 481.2 492.7 484.2 491.0 485.0C489.3 485.8 485.8 484.5 483.0 483.0C480.2 481.5 477.0 479.5 474.0 476.0C471.0 472.5 465.7 465.3 465.0 462.0z" fill="#fff"/>
<path d="M672.0 479.0C670.2 477.7 668.3 473.2 669.0 470.0C669.7 466.8 672.8 463.2 676.0 460.0C679.2 456.8 684.5 452.8 688.0 451.0C691.5 449.2 695.3 448.0 697.0 449.0C698.7 450.0 699.5 454.0 698.0 457.0C696.5 460.0 691.0 463.5 688.0 467.0C685.0 470.5 682.7 476.0 680.0 478.0C677.3 480.0 673.8 480.3 672.0 479.0z" fill="#fff"/>
<path d="M476.0 406.0C477.6 404.5 483.9 402.7 486.0 403.0C488.1 403.3 491.2 405.7 492.0 408.0C492.8 410.3 492.4 416.5 492.0 420.0C491.6 423.5 490.6 431.9 489.0 434.0C487.4 436.1 481.7 437.1 480.0 436.0C478.3 434.9 476.8 428.9 476.0 426.0C475.2 423.1 474.0 416.7 474.0 414.0C474.0 411.3 474.4 407.5 476.0 406.0z" fill="#fff"/>
<path d="M650.0 404.0C652.0 403.7 655.0 405.7 658.0 408.0C661.0 410.3 664.7 414.3 668.0 418.0C671.3 421.7 676.0 426.7 678.0 430.0C680.0 433.3 681.0 437.0 680.0 438.0C679.0 439.0 675.0 437.7 672.0 436.0C669.0 434.3 665.3 431.0 662.0 428.0C658.7 425.0 654.7 421.0 652.0 418.0C649.3 415.0 646.3 412.3 646.0 410.0C645.7 407.7 648.0 404.3 650.0 404.0z" fill="#fff"/>
<path d="M506.0 503.0C508.3 503.5 515.2 505.8 520.0 506.0C524.8 506.2 530.5 505.3 535.0 504.0C539.5 502.7 545.0 499.0 547.0 498.0" fill="none" stroke="#dedede" stroke-width="5" stroke-linecap="round"/>
<path d="M624.0 504.0C626.7 504.5 634.8 507.0 640.0 507.0C645.2 507.0 650.5 505.7 655.0 504.0C659.5 502.3 665.0 498.2 667.0 497.0" fill="none" stroke="#dedede" stroke-width="5" stroke-linecap="round"/>
<path d="M380.0 462.0C380.5 458.8 382.4 452.4 384.0 450.0C385.6 447.6 389.6 444.5 392.0 444.0C394.4 443.5 399.6 444.5 402.0 446.0C404.4 447.5 408.0 452.3 410.0 455.0C412.0 457.7 415.0 462.9 417.0 466.0C419.0 469.1 422.6 474.9 425.0 478.0C427.4 481.1 431.8 486.5 435.0 489.0C438.2 491.5 444.7 494.9 449.0 497.0C453.3 499.1 461.8 502.7 467.0 505.0C472.2 507.3 485.5 512.2 488.0 514.0C490.5 515.8 489.5 518.6 486.0 518.5C482.5 518.4 467.3 514.3 462.0 513.0C456.7 511.7 449.5 509.5 446.0 509.0C442.5 508.5 437.6 508.1 436.0 509.0C434.4 509.9 434.0 513.2 434.0 516.0C434.0 518.8 435.1 526.0 436.0 530.0C436.9 534.0 442.2 543.3 441.0 546.0C439.8 548.7 430.3 551.3 427.0 550.0C423.7 548.7 418.7 540.8 416.0 536.0C413.3 531.2 409.1 519.3 407.0 514.0C404.9 508.7 401.7 500.0 400.0 496.0C398.3 492.0 395.9 486.0 394.0 484.0C392.1 482.0 387.9 482.3 386.0 481.0C384.1 479.7 380.8 476.5 380.0 474.0C379.2 471.5 379.5 465.2 380.0 462.0z" fill="#fff"/>
<ellipse cx="396" cy="462" rx="5" ry="6" fill="#d8d8d8"/>
<path d="M733.0 464.0C734.2 462.1 737.5 457.5 740.0 456.0C742.5 454.5 748.5 453.1 752.0 453.0C755.5 452.9 762.9 453.4 766.0 455.0C769.1 456.6 774.1 461.9 775.0 465.0C775.9 468.1 774.6 475.5 773.0 478.0C771.4 480.5 765.3 482.8 763.0 484.0C760.7 485.2 757.5 485.4 756.0 487.0C754.5 488.6 752.8 492.4 752.0 496.0C751.2 499.6 750.5 509.2 750.0 514.0C749.5 518.8 748.8 527.5 748.0 532.0C747.2 536.5 746.8 545.9 744.0 548.0C741.2 550.1 729.4 550.4 727.0 548.0C724.6 545.6 725.9 534.8 726.0 530.0C726.1 525.2 728.0 515.2 728.0 512.0C728.0 508.8 728.7 506.4 726.0 506.0C723.3 505.6 712.8 508.2 708.0 509.0C703.2 509.8 694.1 511.3 690.0 512.0C685.9 512.7 678.9 514.3 677.0 514.0C675.1 513.7 673.6 511.3 676.0 510.0C678.4 508.7 690.1 505.7 695.0 504.0C699.9 502.3 709.1 498.9 713.0 497.0C716.9 495.1 721.9 492.3 724.0 490.0C726.1 487.7 728.1 482.7 729.0 480.0C729.9 477.3 730.5 472.1 731.0 470.0C731.5 467.9 731.8 465.9 733.0 464.0z" fill="#fff"/>
<ellipse cx="753.6" cy="468.4" rx="3.2" ry="2.4" fill="#999"/>
<path d="M374.0 384.0C374.4 382.4 377.6 381.3 380.0 381.0C382.4 380.7 389.3 381.1 392.0 382.0C394.7 382.9 398.5 386.0 400.0 388.0C401.5 390.0 402.7 394.9 403.0 397.0C403.3 399.1 401.3 402.7 402.0 404.0C402.7 405.3 405.9 405.9 408.0 407.0C410.1 408.1 415.1 410.4 418.0 412.0C420.9 413.6 426.4 416.9 430.0 419.0C433.6 421.1 443.5 426.1 445.0 428.0C446.5 429.9 443.3 432.9 441.0 433.0C438.7 433.1 431.6 430.2 428.0 429.0C424.4 427.8 417.5 425.5 414.0 424.0C410.5 422.5 404.9 419.7 402.0 418.0C399.1 416.3 394.4 413.0 392.0 411.0C389.6 409.0 386.0 405.4 384.0 403.0C382.0 400.6 378.3 395.5 377.0 393.0C375.7 390.5 373.6 385.6 374.0 384.0z" fill="#fff"/>
<path d="M392.0 416.0C392.8 414.8 396.0 413.7 398.0 414.0C400.0 414.3 403.7 416.7 404.0 418.0C404.3 419.3 401.8 421.5 400.0 422.0C398.2 422.5 394.3 422.0 393.0 421.0C391.7 420.0 391.2 417.2 392.0 416.0z" fill="#f0f0f0"/>
<path d="M448.0 430.0C448.4 427.9 453.9 421.6 456.0 418.0C458.1 414.4 462.1 405.9 464.0 403.0C465.9 400.1 467.9 397.2 470.0 396.0C472.1 394.8 477.6 393.7 480.0 394.0C482.4 394.3 487.1 396.4 488.0 398.0C488.9 399.6 488.3 404.4 487.0 406.0C485.7 407.6 480.3 408.9 478.0 410.0C475.7 411.1 472.1 411.9 470.0 414.0C467.9 416.1 464.3 423.3 462.0 426.0C459.7 428.7 454.9 433.5 453.0 434.0C451.1 434.5 447.6 432.1 448.0 430.0z" fill="#fff"/>
<path d="M489.0 400.0C488.6 398.1 490.8 392.5 492.0 390.0C493.2 387.5 495.9 383.4 498.0 381.0C500.1 378.6 505.2 374.4 508.0 372.0C510.8 369.6 516.9 363.8 519.0 363.0C521.1 362.2 523.9 364.5 524.0 366.0C524.1 367.5 520.0 372.1 520.0 374.0C520.0 375.9 522.0 379.5 524.0 380.0C526.0 380.5 532.1 378.0 535.0 378.0C537.9 378.0 544.4 378.1 546.0 380.0C547.6 381.9 547.3 389.1 547.0 392.0C546.7 394.9 546.3 400.9 544.0 402.0C541.7 403.1 533.2 400.0 530.0 400.0C526.8 400.0 523.3 401.7 520.0 402.0C516.7 402.3 508.3 401.7 505.0 402.0C501.7 402.3 497.1 404.3 495.0 404.0C492.9 403.7 489.4 401.9 489.0 400.0z" fill="#fff"/>
<path d="M523.0 366.0C524.2 363.5 527.7 357.6 530.0 356.0C532.3 354.4 537.6 353.5 540.0 354.0C542.4 354.5 546.4 357.9 548.0 360.0C549.6 362.1 551.7 367.5 552.0 370.0C552.3 372.5 551.6 377.9 550.0 379.0C548.4 380.1 542.9 378.0 540.0 378.0C537.1 378.0 530.5 379.4 528.0 379.0C525.5 378.6 521.7 376.7 521.0 375.0C520.3 373.3 521.8 368.5 523.0 366.0z" fill="#b8b8b8" stroke="#e6e6e6" stroke-width="1.5"/>
<path d="M588.0 352.0C590.0 350.0 595.5 349.7 600.0 350.0C604.5 350.3 610.8 352.0 615.0 354.0C619.2 356.0 622.5 359.0 625.0 362.0C627.5 365.0 630.5 369.0 630.0 372.0C629.5 375.0 626.0 378.7 622.0 380.0C618.0 381.3 610.7 381.3 606.0 380.0C601.3 378.7 597.0 375.0 594.0 372.0C591.0 369.0 589.0 365.3 588.0 362.0C587.0 358.7 586.0 354.0 588.0 352.0z" fill="#a8a8a8"/>
<path d="M588.0 370.0C588.8 369.5 595.6 373.1 598.0 374.0C600.4 374.9 603.9 377.0 606.0 377.0C608.1 377.0 611.9 375.5 614.0 374.0C616.1 372.5 620.1 366.8 622.0 366.0C623.9 365.2 625.6 366.1 628.0 368.0C630.4 369.9 637.1 376.8 640.0 380.0C642.9 383.2 649.2 389.6 650.0 392.0C650.8 394.4 648.4 397.7 646.0 398.0C643.6 398.3 635.7 395.1 632.0 394.0C628.3 392.9 621.7 391.2 618.0 390.0C614.3 388.8 607.5 386.6 604.0 385.0C600.5 383.4 594.1 380.0 592.0 378.0C589.9 376.0 587.2 370.5 588.0 370.0z" fill="#fff"/>
</g>
</g>
<path d="M355 596Q410 620 467 634" fill="none" stroke="#bdbdbd" stroke-width="1"/>
<path d="M685 634Q750 618 813 590.5" fill="none" stroke="#bdbdbd" stroke-width="1"/>
</svg><!--/CT-->
  <div class="abs" style="left:0;top:504px;width:4px;height:165px;background:#e4e2ec"></div>
  <!-- strips -->
  <!--STRIPS--><svg class="abs" style="left:463px;top:74px" width="466" height="568" viewBox="814 119 466 568">
<defs>
<clipPath id="s2"><polygon points="899,412 904.5,395 1005,395 1005,401.5 1010,402 1017,412"/></clipPath>
<clipPath id="s3"><rect x="1045" y="395" width="231" height="17"/></clipPath>
<filter id="sb" x="-5%" y="-30%" width="110%" height="160%"><feGaussianBlur stdDeviation="0.9 0.3"/></filter>
</defs>
<g clip-path="url(#s2)"><g filter="url(#sb)">
<polygon points="895.0,394.0 925.0,394.0 925.0,413.0 895.0,413.0" fill="#858585"/>
<polygon points="904.0,394.0 907.0,394.0 907.0,413.0 904.0,413.0" fill="#6a6a6a"/>
<polygon points="911.5,394.0 917.5,394.0 917.5,413.0 911.5,413.0" fill="#b2b2b2"/>
<polygon points="920.0,394.0 924.0,394.0 925.0,413.0 921.0,413.0" fill="#4a4a4a"/>
<polygon points="923.0,394.0 930.0,394.0 931.5,413.0 924.5,413.0" fill="#1c1c1c"/>
<polygon points="928.0,394.0 936.0,394.0 938.0,413.0 930.0,413.0" fill="#000"/>
<polygon points="935.0,394.0 937.2,394.0 940.7,413.0 938.5,413.0" fill="#e0e0e0"/>
<polygon points="937.5,394.0 944.0,394.0 947.0,413.0 940.5,413.0" fill="#2c2c2c"/>
<polygon points="943.5,394.0 1000.0,394.0 1000.0,413.0 943.5,413.0" fill="#e6e6e6"/>
<polygon points="947.0,394.0 958.0,394.0 958.0,413.0 947.0,413.0" fill="#fafafa"/>
<polygon points="960.0,394.0 969.0,394.0 983.0,413.0 974.0,413.0" fill="#7a7a7a"/>
<polygon points="969.0,394.0 975.0,394.0 989.0,413.0 983.0,413.0" fill="#fff"/>
<polygon points="975.0,394.0 996.0,394.0 996.0,413.0 975.0,413.0" fill="#fff"/>
<polygon points="992.0,394.0 996.0,394.0 1002.0,413.0 998.0,413.0" fill="#a0a0a0"/>
<polygon points="995.0,394.0 1006.0,394.0 1006.0,413.0 995.0,413.0" fill="#8a8a8a"/>
<polygon points="1004.0,394.0 1020.0,394.0 1020.0,413.0 1004.0,413.0" fill="#5c5c5c"/>
</g></g>
<g clip-path="url(#s3)"><g filter="url(#sb)">
<polygon points="1040.0,394.0 1062.0,394.0 1062.0,413.0 1040.0,413.0" fill="#8e8e8e"/>
<polygon points="1045.0,394.0 1050.0,394.0 1050.0,413.0 1045.0,413.0" fill="#a4a4a4"/>
<polygon points="1056.0,394.0 1060.0,394.0 1060.0,413.0 1056.0,413.0" fill="#707070"/>
<polygon points="1059.5,394.0 1064.5,394.0 1067.5,413.0 1062.5,413.0" fill="#2e2e2e"/>
<polygon points="1064.5,394.0 1075.0,394.0 1078.0,413.0 1067.5,413.0" fill="#fff"/>
<polygon points="1075.0,394.0 1081.0,394.0 1084.0,413.0 1078.0,413.0" fill="#6a6a6a"/>
<polygon points="1081.0,394.0 1087.0,394.0 1089.0,413.0 1083.0,413.0" fill="#333"/>
<polygon points="1087.0,394.0 1101.0,394.0 1101.0,413.0 1087.0,413.0" fill="#808080"/>
<polygon points="1090.0,394.0 1094.0,394.0 1094.0,413.0 1090.0,413.0" fill="#9a9a9a"/>
<polygon points="1100.5,394.0 1124.0,394.0 1121.0,413.0 1097.5,413.0" fill="#fff"/>
<polygon points="1113.0,404.0 1117.0,404.0 1119.0,413.0 1115.0,413.0" fill="#555"/>
<polygon points="1124.0,394.0 1140.0,394.0 1140.0,404.0 1124.0,404.0" fill="#3a3a3a"/>
<polygon points="1121.0,404.0 1140.0,404.0 1140.0,413.0 1121.0,413.0" fill="#050505"/>
<polygon points="1128.0,394.0 1131.0,394.0 1131.0,404.0 1128.0,404.0" fill="#666"/>
<polygon points="1134.0,394.0 1137.0,394.0 1137.0,404.0 1134.0,404.0" fill="#5a5a5a"/>
<polygon points="1139.6,394.0 1142.5,394.0 1142.5,413.0 1139.6,413.0" fill="#fff"/>
<polygon points="1142.5,394.0 1149.0,394.0 1149.0,413.0 1142.5,413.0" fill="#777"/>
<polygon points="1148.4,394.0 1153.0,394.0 1153.0,413.0 1148.4,413.0" fill="#222"/>
<polygon points="1152.5,394.0 1163.5,394.0 1160.0,413.0 1149.0,413.0" fill="#000"/>
<polygon points="1163.5,394.0 1173.0,394.0 1169.5,413.0 1160.0,413.0" fill="#c4c4c4"/>
<polygon points="1167.0,394.0 1171.5,394.0 1170.5,413.0 1166.0,413.0" fill="#f4f4f4"/>
<polygon points="1172.3,394.0 1181.0,394.0 1181.0,413.0 1172.3,413.0" fill="#777"/>
<polygon points="1180.5,394.0 1190.0,394.0 1190.0,413.0 1180.5,413.0" fill="#1e1e1e"/>
<polygon points="1175.5,405.0 1192.0,405.0 1192.0,413.0 1175.5,413.0" fill="#000"/>
<polygon points="1189.6,394.0 1200.8,394.0 1200.8,402.5 1189.6,402.5" fill="#fff"/>
<polygon points="1189.6,402.5 1200.8,402.5 1200.8,413.0 1189.6,413.0" fill="#8a8a8a"/>
<polygon points="1192.0,402.0 1197.0,402.0 1197.0,413.0 1192.0,413.0" fill="#fff"/>
<polygon points="1200.8,394.0 1280.0,394.0 1280.0,413.0 1200.8,413.0" fill="#838383"/>
<polygon points="1204.0,394.0 1209.0,394.0 1209.0,413.0 1204.0,413.0" fill="#6c6c6c"/>
<polygon points="1212.0,394.0 1222.0,394.0 1222.0,413.0 1212.0,413.0" fill="#909090"/>
<polygon points="1225.0,394.0 1236.0,394.0 1236.0,413.0 1225.0,413.0" fill="#5e5e5e"/>
<polygon points="1236.0,394.0 1244.5,394.0 1244.5,413.0 1236.0,413.0" fill="#9a9a9a"/>
<polygon points="1244.5,394.0 1250.5,394.0 1250.5,413.0 1244.5,413.0" fill="#666"/>
<polygon points="1250.5,394.0 1272.0,394.0 1272.0,413.0 1250.5,413.0" fill="#929292"/>
<polygon points="1258.0,394.0 1261.0,394.0 1261.0,413.0 1258.0,413.0" fill="#7e7e7e"/>
<polygon points="1272.0,394.0 1277.0,394.0 1277.0,413.0 1272.0,413.0" fill="#6a6a6a"/>
</g></g>
</svg><!--/STRIPS-->
  <!-- crosshairs -->
  <svg class="abs" style="left:0;top:74px" width="929" height="568" viewBox="351 119 929 568">
    <g stroke="#d4ae5c" stroke-width="1" fill="none" shape-rendering="crispEdges">
      <path d="M582.5 119V392M582.5 416V687M351 404.5H570M594 404.5H813"/>
      <path d="M929.5 119V392M929.5 416V687M814 404.5H917M941 404.5H1044"/>
      <path d="M1161.5 119V392M1161.5 416V687M1045 404.5H1149M1173 404.5H1276"/>
    </g>
  </svg>
  <div class="abs" style="left:462px;top:74px;width:1px;height:568px;background:#c4c4c4"></div>
  <div class="abs" style="left:693px;top:74px;width:1px;height:568px;background:#c4c4c4"></div>

  <!-- sliders -->
  <div class="sl" style="left:4px;width:457px">
    <div class="track" style="left:8px;width:394px"></div>
    <div class="thumb" style="left:195px"><i></i></div>
    <div class="btn" style="left:414px"><svg width="18" height="18" viewBox="0 0 18 18"><polyline points="11.6,4 5.6,9 11.6,14" fill="none" stroke="#5e5e5e" stroke-width="1"/></svg></div><div class="btn" style="left:433px"><svg width="18" height="18" viewBox="0 0 18 18"><polyline points="6.4,4 12.4,9 6.4,14" fill="none" stroke="#5e5e5e" stroke-width="1"/></svg></div>
  </div>
  <div class="sl" style="left:464px;width:228px">
    <div class="track" style="left:12px;width:161px"></div>
    <div class="thumb" style="left:83px"><i></i></div>
    <div class="btn" style="left:185px"><svg width="18" height="18" viewBox="0 0 18 18"><polyline points="11.6,4 5.6,9 11.6,14" fill="none" stroke="#5e5e5e" stroke-width="1"/></svg></div><div class="btn" style="left:204px"><svg width="18" height="18" viewBox="0 0 18 18"><polyline points="6.4,4 12.4,9 6.4,14" fill="none" stroke="#5e5e5e" stroke-width="1"/></svg></div>
  </div>
  <div class="sl" style="left:695px;width:229px">
    <div class="track" style="left:12px;width:162px"></div>
    <div class="thumb" style="left:83px"><i></i></div>
    <div class="btn" style="left:186px"><svg width="18" height="18" viewBox="0 0 18 18"><polyline points="11.6,4 5.6,9 11.6,14" fill="none" stroke="#5e5e5e" stroke-width="1"/></svg></div><div class="btn" style="left:205px"><svg width="18" height="18" viewBox="0 0 18 18"><polyline points="6.4,4 12.4,9 6.4,14" fill="none" stroke="#5e5e5e" stroke-width="1"/></svg></div>
  </div>
</div>

</body>
</html>
